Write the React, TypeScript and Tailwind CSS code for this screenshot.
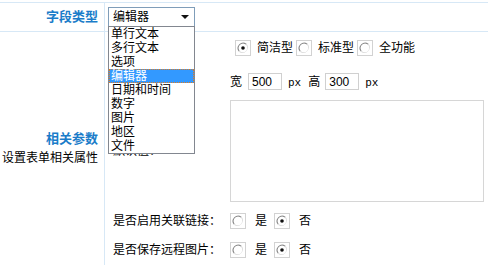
import React from 'react';

const line = 'border-[#d7e8f6]';
const fieldTypes = ['单行文本', '多行文本', '选项', '编辑器', '日期和时间', '数字', '图片', '地区', '文件'];

const Radio = ({ checked = false }: { checked?: boolean }) => (
  <span className="inline-flex h-[16px] w-[16px] shrink-0 items-center justify-center border border-[#d2d2d2] bg-white">
    <svg width="12" height="12" viewBox="0 0 12 12">
      <path d="M2.2 9.2 A5 5 0 0 1 9.2 2.2" fill="none" stroke="#8c8c8c" strokeWidth="1.2" />
      <path d="M9.2 2.2 A5 5 0 0 1 2.2 9.2" fill="none" stroke="#dcdcdc" strokeWidth="1.2" />
      <circle cx="6" cy="6" r="4.2" fill="#fff" />
      {checked && <circle cx="6" cy="6" r="1.8" fill="#111" />}
    </svg>
  </span>
);

const SizeInput = ({ value }: { value: string }) => (
  <span className="inline-flex h-[17px] w-[34px] items-center border border-[#d0d0d0] bg-white pl-[3px] text-[12px] leading-none">
    {value}
  </span>
);

const Px = () => <span className="font-['Liberation_Mono',monospace] text-[11px] leading-none">px</span>;

export default function App() {
  return (
    <div className="relative h-[265px] w-[488px] overflow-hidden bg-white font-['Liberation_Sans','Noto_Sans_CJK_SC',sans-serif] text-[12px] leading-[14px] text-black">
      <div className={`mt-[2px] grid grid-cols-[105px_1fr] border-t ${line}`}>
        {/* 字段类型 */}
        <div className={`flex h-[29px] items-center justify-end border-r border-b ${line} pr-[6px] text-[13px] font-bold text-[#1a7cc9]`}>
          字段类型
        </div>
        <div className={`flex h-[29px] items-center border-b ${line} pl-[3px]`}>
          <div className="relative">
            <div className="flex h-[20px] w-[87px] items-center justify-between border border-[#7f9db9] bg-white pl-[4px] pr-[5px]">
              <span>编辑器</span>
              <svg width="8" height="4" viewBox="0 0 8 4">
                <path d="M0 0 H8 L4 4 Z" fill="#111" />
              </svg>
            </div>
            {/* open list */}
            <ul className="absolute left-0 top-[19px] z-10 w-[87px] border border-[#828790] bg-white">
              {fieldTypes.map((t) => (
                <li
                  key={t}
                  className={
                    t === '编辑器'
                      ? 'h-[14px] border border-dotted border-[#e07b1e] bg-[#3399ff] pl-[1px] leading-[12px] text-white'
                      : 'h-[14px] pl-[2px]'
                  }
                >
                  {t}
                </li>
              ))}
            </ul>
          </div>
        </div>

        {/* 相关参数 */}
        <div className={`flex h-[240px] flex-col items-end border-r ${line} pr-[6px] pt-[100px]`}>
          <div className="h-[19px] text-[13px] font-bold text-[#1a7cc9]">相关参数</div>
          <div className="h-[19px]">设置表单相关属性</div>
        </div>
        <div className="grid grid-cols-[125px_1fr] content-start">
          <div className="mt-[8px] h-[16px]" />
          <div className="mt-[8px] flex h-[16px] items-center pl-[5px]">
            <Radio checked />
            <span className="ml-[6px]">简洁型</span>
            <span className="ml-[3px]"><Radio /></span>
            <span className="ml-[6px]">标准型</span>
            <span className="ml-[3px]"><Radio /></span>
            <span className="ml-[6px]">全功能</span>
          </div>

          <div className="mt-[17px] h-[17px]" />
          <div className="mt-[17px] flex h-[17px] items-center">
            <span>宽</span>
            <span className="ml-[6px]"><SizeInput value="500" /></span>
            <span className="ml-[6px]"><Px /></span>
            <span className="ml-[7px]">高</span>
            <span className="ml-[5px]"><SizeInput value="300" /></span>
            <span className="ml-[6px]"><Px /></span>
          </div>

          <div className="mt-[10px] flex h-[102px] items-center pl-[8px]">默认值：</div>
          <div className="mt-[10px] h-[102px] w-[254px] border border-[#d6d6d6] bg-white" />

          <div className="mt-[11px] flex h-[16px] items-center pl-[8px]">是否启用关联链接：</div>
          <div className="mt-[11px] flex h-[16px] items-center">
            <Radio />
            <span className="ml-[9px]">是</span>
            <span className="ml-[7px]"><Radio checked /></span>
            <span className="ml-[9px]">否</span>
          </div>

          <div className="mt-[13px] flex h-[16px] items-center pl-[8px]">是否保存远程图片：</div>
          <div className="mt-[13px] flex h-[16px] items-center">
            <Radio />
            <span className="ml-[9px]">是</span>
            <span className="ml-[7px]"><Radio checked /></span>
            <span className="ml-[9px]">否</span>
          </div>
        </div>
      </div>
    </div>
  );
}
